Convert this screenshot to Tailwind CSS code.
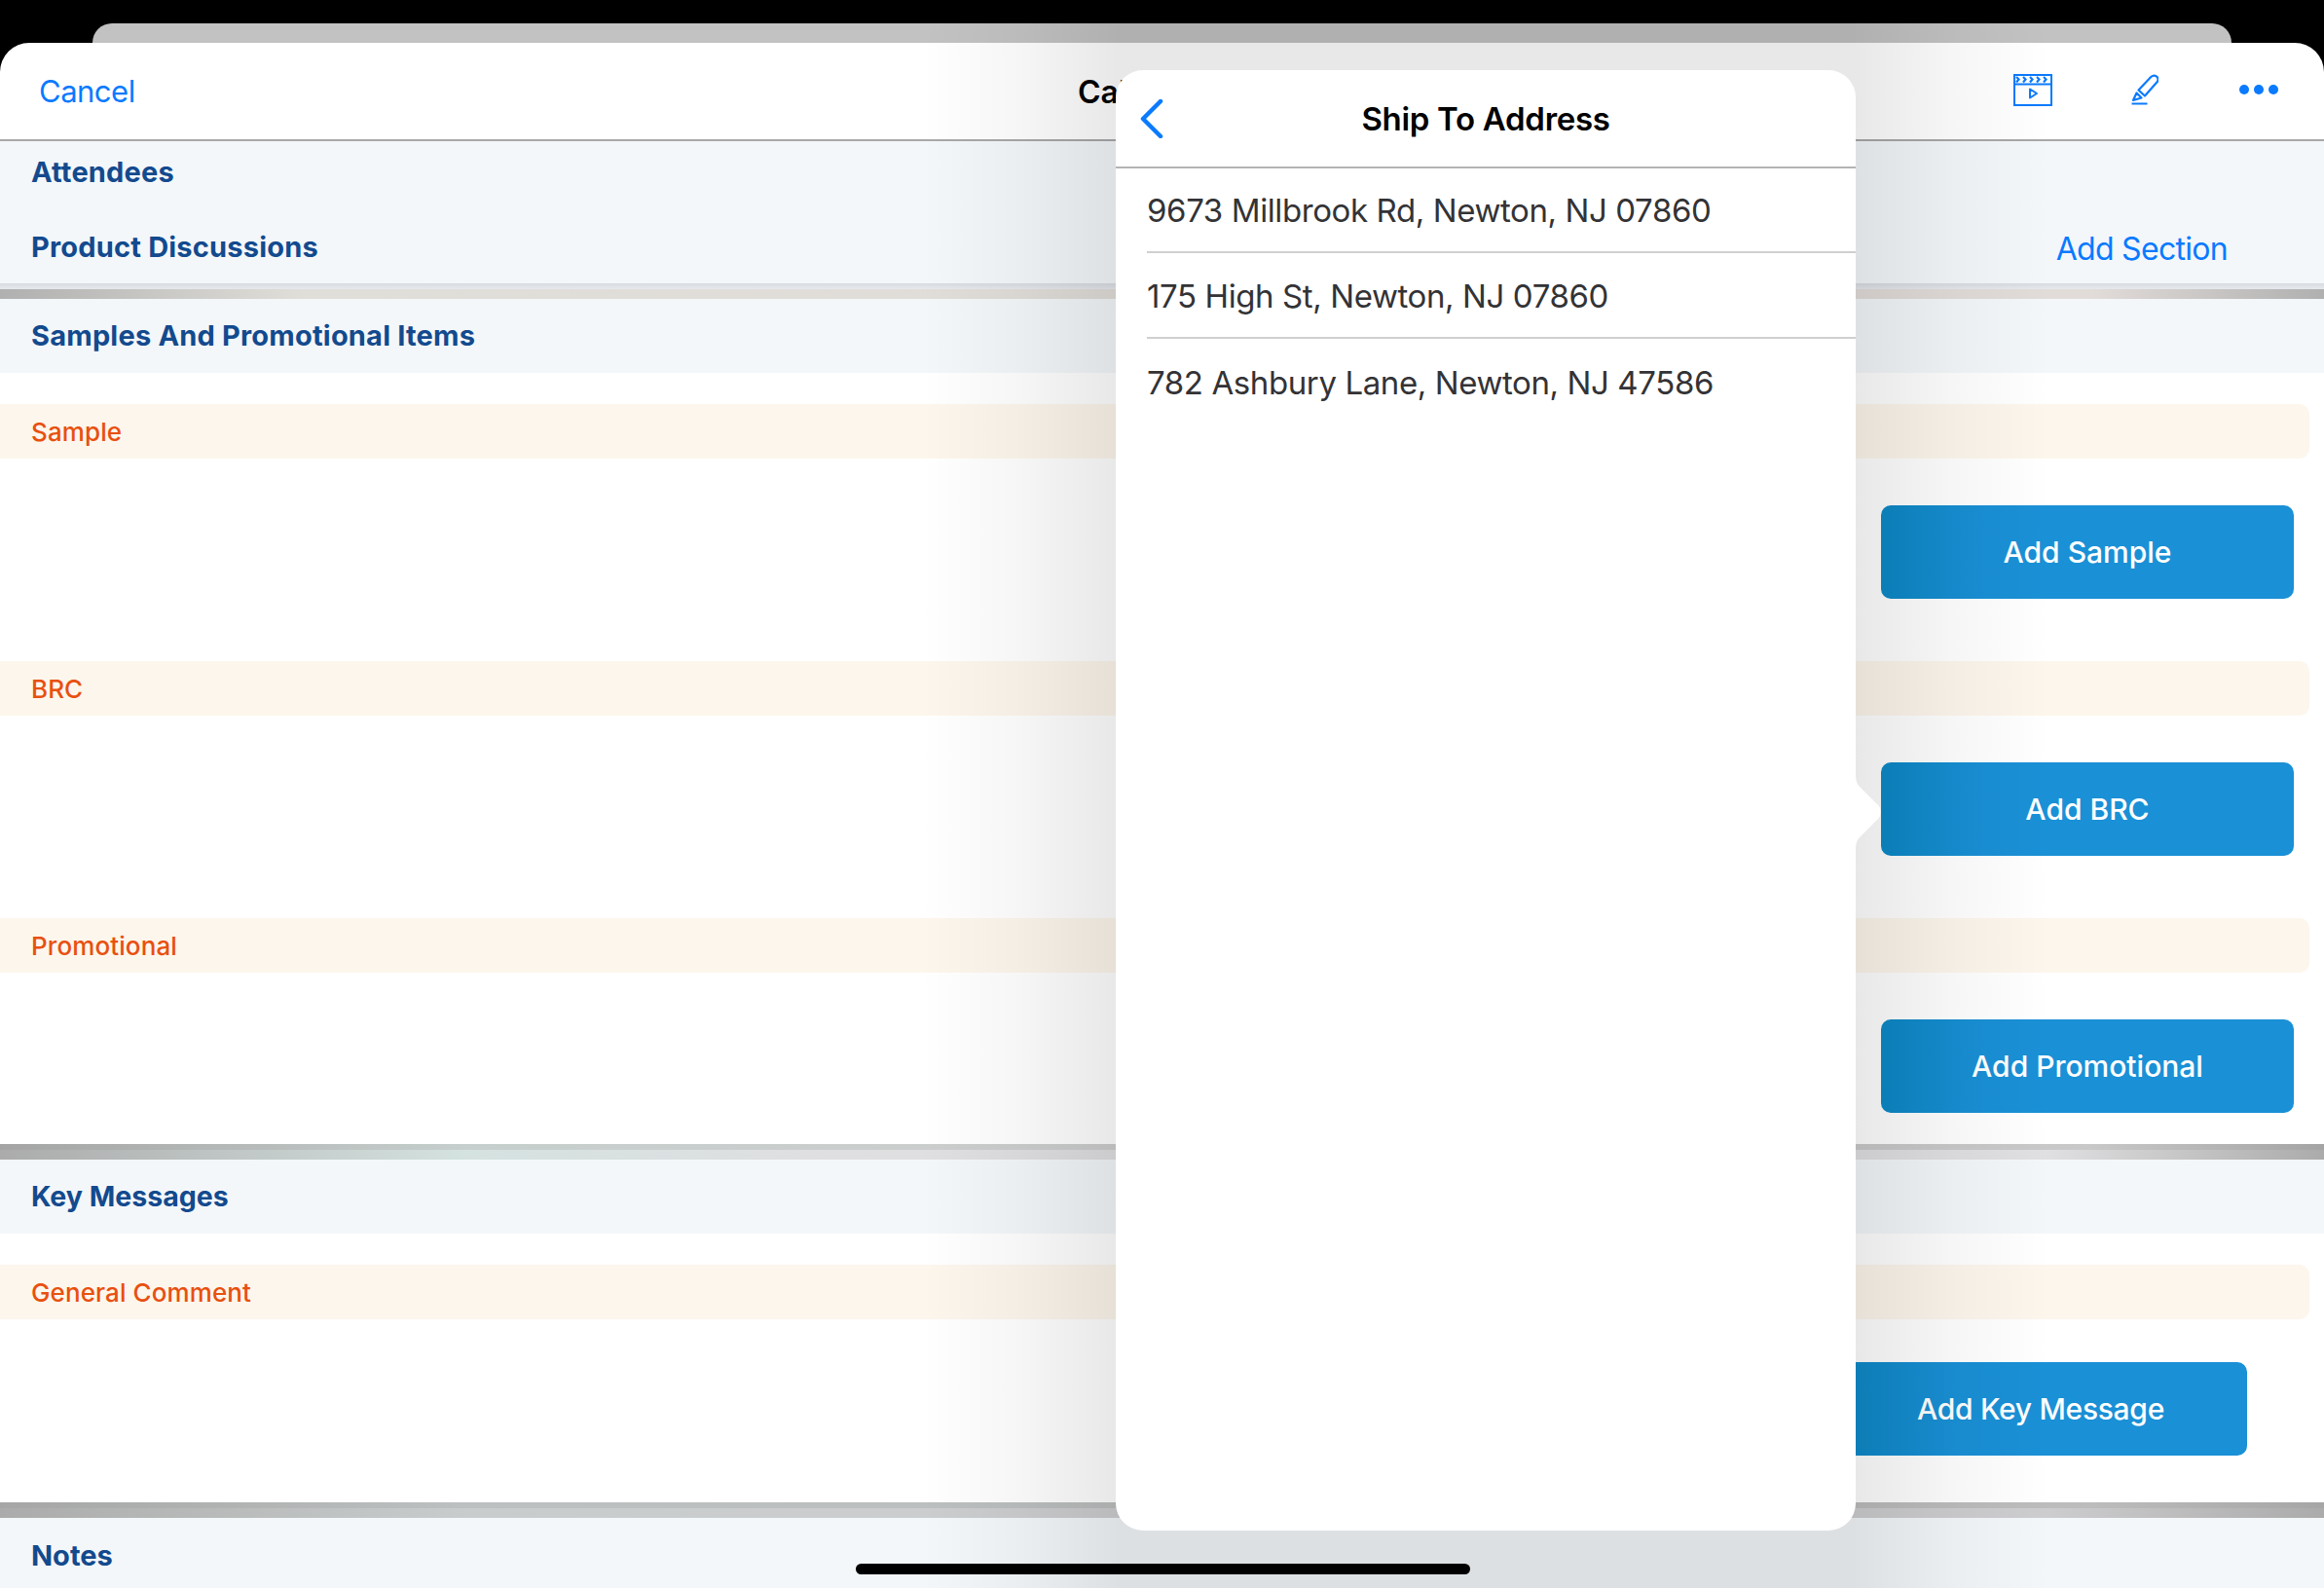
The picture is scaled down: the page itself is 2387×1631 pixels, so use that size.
<!DOCTYPE html>
<html lang="en">
<head>
    <meta charset="UTF-8">
    <title>Call</title>
    <script src="https://cdn.jsdelivr.net/npm/@tailwindcss/browser@4"></script>
</head>
<body class="bg-black font-['Inter',sans-serif]">
    <div class="relative w-[2387px] h-[1631px] overflow-hidden bg-black pt-6">
        <!-- card behind the sheet -->
        <div class="h-5 mx-[95px] rounded-t-[22px] bg-[#c2c2c2]"></div>

        <!-- main sheet -->
        <div class="rounded-t-[30px] bg-white h-[1587px] overflow-hidden flex flex-col">
            <div class="h-[101px] shrink-0 flex items-center border-b-2 border-[#a8a8a8] pt-[2px]">
                <span class="w-[1107px] pl-[40px] text-[31px] tracking-[-0.5px] text-[#0a7aff]">Cancel</span>
                <span class="text-[32px] font-semibold text-black">Cal</span>
                <div class="ml-auto flex items-center mr-[47px] -mt-[5px]">
                    <svg class="w-10 h-[33px]" viewBox="0 0 40 33" fill="none" stroke="#0a7aff" stroke-width="2">
                        <rect x="1" y="1" width="38" height="31"/>
                        <path d="M1 10.500h38"/>
                        <path d="M3 3l2.500 2.500L3 8.500M10 3l2.500 2.500L10 8.500M17 3l2.500 2.500L17 8.500M24 3l2.500 2.500L24 8.500M31 3l2.500 2.500L31 8.500" stroke-width="2.200"/>
                        <path d="M17 15.500v9l7-4.500z" stroke-linejoin="round"/>
                    </svg>
                    <svg class="ml-[81px] w-7 h-8" viewBox="0 0 28 32" fill="none" stroke="#0a7aff" stroke-width="2.200" stroke-linejoin="round">
                        <path d="M7.500 16.500L20.500 2.800c2-1.800 4.500-1.500 5.800 0s1.600 4 0 5.800L14 22.500z"/>
                        <path d="M5.500 19.500L2 27l8.500-2.500z"/>
                        <path d="M0.500 30.500h16"/>
                    </svg>
                    <div class="ml-[83px] flex gap-[5px]">
                        <span class="w-[10px] h-[10px] rounded-full bg-[#0a7aff]"></span>
                        <span class="w-[10px] h-[10px] rounded-full bg-[#0a7aff]"></span>
                        <span class="w-[10px] h-[10px] rounded-full bg-[#0a7aff]"></span>
                    </div>
                </div>
            </div>

            <div class="h-[146px] shrink-0 bg-[#f3f7fa] flex flex-col pl-[32px] text-[29px] tracking-[0.2px] font-bold text-[#134a8e]">
                <div class="h-[64px] flex items-center">Attendees</div>
                <div class="h-[76px] flex items-center justify-between pr-[99px] pt-[14px]">
                    <span>Product Discussions</span>
                    <span class="text-[32px] font-normal tracking-[-0.7px] text-[#0a7aff] mt-[3px]">Add Section</span>
                </div>
            </div>
            <div class="h-[6px] shrink-0 bg-gradient-to-b from-[#d8dce1] to-[#e6e9ed]"></div>
            <div class="h-[10px] shrink-0 bg-[linear-gradient(to_right,#b0b0b0,#e0ded8_13%,#e2dcd9_90%,#b0b0b0)]"></div>

            <div class="h-[76px] shrink-0 bg-[#f3f7fa] flex items-center pl-[32px] text-[29px] tracking-[0.2px] font-bold text-[#134a8e]">Samples And Promotional Items</div>

            <div class="mt-8 h-14 shrink-0 mr-[15px] rounded-r-[10px] bg-[#fdf6ec] flex items-center pl-[32px] text-[26px] tracking-[0.1px] font-medium text-[#e8500f]">Sample</div>
            <div class="h-[208px] shrink-0 pt-12 flex justify-end pr-[31px]">
                <button class="w-[424px] h-24 rounded-[10px] bg-[linear-gradient(to_right,#0c88c6,#1a90d6_25%)] text-white text-[30px] font-medium">Add Sample</button>
            </div>

            <div class="h-14 shrink-0 mr-[15px] rounded-r-[10px] bg-[#fdf6ec] flex items-center pl-[32px] text-[26px] tracking-[0.1px] font-medium text-[#e8500f]">BRC</div>
            <div class="h-[208px] shrink-0 pt-12 flex justify-end pr-[31px]">
                <button class="w-[424px] h-24 rounded-[10px] bg-[linear-gradient(to_right,#0c88c6,#1a90d6_25%)] text-white text-[30px] font-medium">Add BRC</button>
            </div>

            <div class="h-14 shrink-0 mr-[15px] rounded-r-[10px] bg-[#fdf6ec] flex items-center pl-[32px] text-[26px] tracking-[0.1px] font-medium text-[#e8500f]">Promotional</div>
            <div class="h-[176px] shrink-0 pt-12 flex justify-end pr-[31px]">
                <button class="w-[424px] h-24 rounded-[10px] bg-[linear-gradient(to_right,#0c88c6,#1a90d6_25%)] text-white text-[30px] font-medium">Add Promotional</button>
            </div>

            <div class="h-[6px] shrink-0 bg-[linear-gradient(to_right,#a4a4a4,#c6cfcd_20%,#cdcdcd_50%,#c8c8c8_90%,#a4a4a4)]"></div>
            <div class="h-[10px] shrink-0 bg-[linear-gradient(to_right,#ababab,#d4e2e0_20%,#dfdfe1_35%,#e0e0e2_88%,#ababab)]"></div>
            <div class="h-[76px] shrink-0 bg-[#f3f7fa] flex items-center pl-[32px] text-[28.500px] font-bold text-[#134a8e]">Key Messages</div>

            <div class="mt-8 h-14 shrink-0 mr-[15px] rounded-r-[10px] bg-[#fdf6ec] flex items-center pl-[32px] text-[26px] tracking-[0.1px] font-medium text-[#e8500f]">General Comment</div>
            <div class="h-[188px] shrink-0 pt-11 flex justify-end pr-[79px]">
                <button class="w-[424px] h-24 rounded-[10px] bg-[linear-gradient(to_right,#0c88c6,#1a90d6_30%)] text-white text-[30px] tracking-[-0.3px] font-medium">Add Key Message</button>
            </div>

            <div class="h-[6px] shrink-0 bg-[linear-gradient(to_right,#a6a6a6,#bcc0c0_20%,#bcbcbc_90%,#a6a6a6)]"></div>
            <div class="h-[10px] shrink-0 bg-[linear-gradient(to_right,#ababab,#c8cccc_20%,#cdcdcf_50%,#cdcdcf_88%,#ababab)]"></div>
            <div class="flex-1 bg-[#f3f7fa] pl-[32px] pt-[17px] text-[29px] font-bold text-[#134a8e]">Notes</div>
        </div>

        <!-- dimming around the popover -->
        <div class="absolute left-[946px] top-0 w-[200px] h-full bg-[linear-gradient(to_left,rgba(0,0,0,0.09),rgba(0,0,0,0.035)_50%,transparent)]"></div>
        <div class="absolute left-[1146px] top-0 w-[760px] h-full bg-black/[0.09]"></div>
        <div class="absolute left-[1906px] top-0 w-[200px] h-full bg-[linear-gradient(to_right,rgba(0,0,0,0.09),rgba(0,0,0,0.035)_50%,transparent)]"></div>

        <!-- ship to popover -->
        <div class="absolute left-[1146px] top-[72px] w-[760px] h-[1500px] rounded-[28px] bg-white">
            <svg class="absolute left-full top-[722px] w-[26px] h-[80px]" viewBox="0 0 26 80" fill="white">
                <path d="M0 0c0 8 1 11 5 15l19 19c2 3 2 9 0 12L5 65c-4 4-5 7-5 15z"/>
            </svg>
            <div class="relative h-[101px] border-b-2 border-[#b4b4b4] flex items-center justify-center pt-[2px]">
                <svg class="absolute left-[25px] top-[30px] w-6 h-10" viewBox="0 0 24 40" fill="none" stroke="#0a7aff" stroke-width="4.500" stroke-linecap="round" stroke-linejoin="round">
                    <path d="M21 2L3 20l18 18"/>
                </svg>
                <span class="text-[33px] tracking-[-0.3px] font-semibold text-black">Ship To Address</span>
            </div>
            <div class="pl-8 text-[33px] tracking-[-0.4px] text-[#333336]">
                <div class="h-[87px] flex items-center border-b-2 border-[#d0d0d0] pt-[3px]">9673 Millbrook Rd, Newton, NJ 07860</div>
                <div class="h-[88px] flex items-center border-b-2 border-[#d0d0d0] pt-[3px]">175 High St, Newton, NJ 07860</div>
                <div class="h-[88px] flex items-center pt-[3px]">782 Ashbury Lane, Newton, NJ 47586</div>
            </div>
        </div>

        <!-- home indicator -->
        <div class="absolute left-[879px] top-[1606px] w-[631px] h-[11px] rounded-full bg-black"></div>
    </div>
</body>
</html>
